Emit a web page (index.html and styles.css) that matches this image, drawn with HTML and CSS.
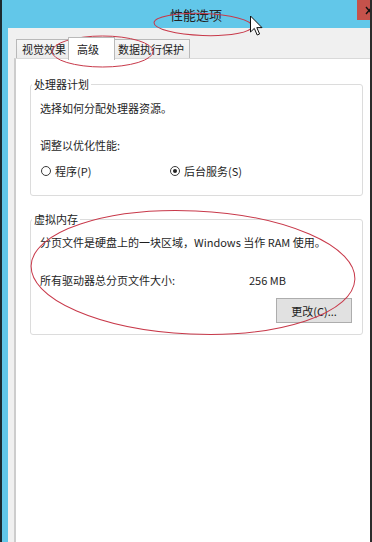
FILE: index.html
```html
<!DOCTYPE html>
<html lang="zh-CN">
<head>
<meta charset="utf-8">
<title>性能选项</title>
<link rel="stylesheet" href="styles.css">
</head>
<body>
<div class="window">
  <div class="titlebar">
    <span class="title">性能选项</span>
    <div class="close">
      <svg class="close-glyph" width="13" height="20" viewBox="0 0 13 20"><path d="M9 7 L15 14 M15 7 L9 14" stroke="#111" stroke-width="1.4" fill="none"/></svg>
    </div>
  </div>
  <div class="main">
    <div class="frame-left"></div>
    <div class="client">
      <div class="tabs">
        <div class="tab tab-visual">视觉效果</div>
        <div class="tab tab-adv active">高级</div>
        <div class="tab tab-dep">数据执行保护</div>
      </div>
      <div class="panel">
        <fieldset class="group group-cpu">
          <legend>处理器计划</legend>
          <p class="line">选择如何分配处理器资源。</p>
          <p class="line line-adjust">调整以优化性能:</p>
          <div class="radios">
            <label class="radio"><span class="radio-circle"></span>程序(P)</label>
            <label class="radio checked"><span class="radio-circle"></span>后台服务(S)</label>
          </div>
        </fieldset>
        <fieldset class="group group-vm">
          <legend>虚拟内存</legend>
          <p class="line">分页文件是硬盘上的一块区域，Windows 当作 RAM 使用。</p>
          <div class="line size-row"><span class="size-label">所有驱动器总分页文件大小:</span><span class="size-value">256 MB</span></div>
          <div class="actions"><button class="btn" type="button">更改(C)...</button></div>
        </fieldset>
      </div>
    </div>
  </div>
  <svg class="annotations" width="372" height="542" viewBox="0 0 372 542">
    <ellipse cx="203" cy="24.5" rx="49" ry="11" transform="rotate(2 203 24.5)" fill="none" stroke="#c8394a" stroke-width="1"/>
    <ellipse cx="102.5" cy="51.5" rx="50.5" ry="15.5" fill="none" stroke="#c8394a" stroke-width="1"/>
    <ellipse cx="193" cy="272.5" rx="162" ry="61.5" transform="rotate(2.5 193 272.5)" fill="none" stroke="#c8394a" stroke-width="1"/>
    <path d="M250.5 16 L250.5 32 L254.3 28.4 L257.2 35 L259.6 34 L256.8 27.6 L262 27.6 Z" fill="#fff" stroke="#111" stroke-width="1" stroke-linejoin="round"/>
  </svg>
</div>
</body>
</html>
```

FILE: styles.css
```css
* {
  box-sizing: border-box;
}

html, body {
  margin: 0;
  padding: 0;
}

body {
  width: 372px;
  height: 542px;
  overflow: hidden;
  background: #f0f0f0;
  font-family: "Noto Sans CJK SC", "Noto Sans", sans-serif;
  font-size: 11px;
  line-height: 14px;
  color: #1e1e1e;
}

.window {
  position: relative;
  width: 372px;
  height: 542px;
  display: flex;
  flex-direction: column;
  border-left: 2px solid #1c2a30;
  border-right: 2px solid #2b2b2b;
}

.titlebar {
  height: 28px;
  flex: none;
  display: flex;
  align-items: flex-start;
  background: #62c7e9;
}

.title {
  margin-left: 168px;
  padding-top: 1px;
  font-size: 13px;
  line-height: 28px;
  color: #222;
}

.close {
  margin-left: auto;
  width: 13px;
  height: 20px;
  background: #c5524b;
  overflow: hidden;
}

.close-glyph {
  display: block;
}

.main {
  flex: 1;
  display: flex;
  min-height: 0;
}

.frame-left {
  width: 6px;
  flex: none;
  background: #62c7e9;
}

.client {
  flex: 1;
  display: flex;
  flex-direction: column;
  background: #f0f0f0;
  padding: 9px 0 0 6px;
}

.tabs {
  display: flex;
  align-items: flex-end;
  height: 21px;
  margin-left: 2px;
}

.tab {
  height: 19px;
  border: 1px solid #b9b9b9;
  border-bottom: none;
  background: linear-gradient(#f6f6f6, #ececec);
  padding-top: 2px;
  white-space: nowrap;
  color: #222;
}

.tab-visual {
  width: 52px;
  padding-left: 5px;
  border-right: none;
}

.tab-adv {
  width: 47px;
  padding-left: 8px;
}

.tab-dep {
  width: 75px;
  padding-left: 3px;
  border-left: none;
}

.tab.active {
  position: relative;
  z-index: 1;
  height: 23px;
  margin-bottom: -2px;
  background: #fff;
  padding-top: 4px;
}

.panel {
  flex: 1;
  background: #fff;
  border-top: 1px solid #d9d9d9;
  border-left: 2px solid #cdcdcd;
  padding: 18px 7px 0 14px;
}

.group {
  margin: 0;
  border: 1px solid #dcdcdc;
  border-radius: 3px;
  padding: 10px 10px 17px 9px;
  min-width: 0;
}

.group legend {
  margin-left: -8px;
  padding: 0 2px;
  font-size: 11px;
  line-height: 14px;
  color: #222;
}

.group-vm {
  margin-top: 16px;
  padding-top: 9px;
  padding-bottom: 11px;
}

.line {
  margin: 0;
  height: 14px;
  white-space: nowrap;
}

.line-adjust {
  margin-top: 23px;
}

.radios {
  margin-top: 12px;
  display: grid;
  grid-template-columns: 129px auto;
  height: 14px;
}

.radio {
  display: flex;
  align-items: center;
  gap: 4px;
  white-space: nowrap;
}

.radio-circle {
  width: 10px;
  height: 10px;
  margin-left: 1px;
  border: 1px solid #3a3a3a;
  border-radius: 50%;
  background: #fff;
  display: flex;
  align-items: center;
  justify-content: center;
}

.radio.checked .radio-circle::after {
  content: "";
  width: 4px;
  height: 4px;
  border-radius: 50%;
  background: #222;
}

.size-row {
  margin-top: 24px;
  display: flex;
}

.size-label {
  width: 209px;
  flex: none;
}

.actions {
  margin-top: 11px;
  display: flex;
  justify-content: flex-end;
}

.btn {
  width: 76px;
  height: 25px;
  margin: 0;
  padding: 0;
  border: 1px solid #adadad;
  background: #e1e1e1;
  font-family: inherit;
  font-size: 11px;
  line-height: 14px;
  color: #222;
}

.annotations {
  position: absolute;
  top: 0;
  left: -2px;
  pointer-events: none;
}
```
